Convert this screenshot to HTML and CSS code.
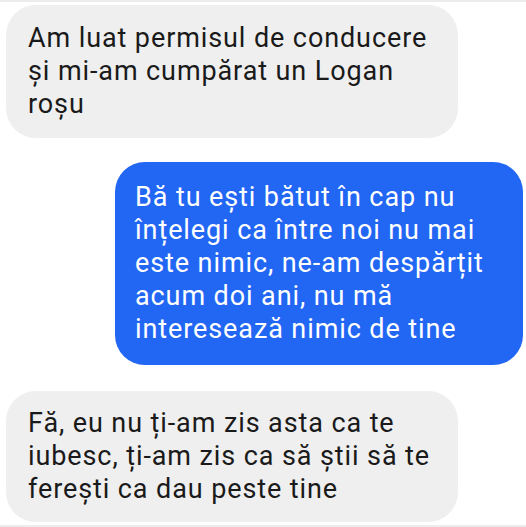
FILE: index.html
```html
<!DOCTYPE html>
<html lang="ro">
<head>
    <meta charset="UTF-8">
    <meta name="viewport" content="width=device-width, initial-scale=1.0">
    <title>Chat</title>
    <link rel="stylesheet" href="styles.css">
</head>
<body>
    <div class="chat">
        <div class="msg received first">
            Am luat permisul de conducere<br>
            și mi-am cumpărat un Logan<br>
            roșu
        </div>
        <div class="msg sent">
            Bă tu ești bătut în cap nu<br>
            înțelegi ca între noi nu mai<br>
            este nimic, ne-am despărțit<br>
            acum doi ani, nu mă<br>
            interesează nimic de tine
        </div>
        <div class="msg received last">
            Fă, eu nu ți-am zis asta ca te<br>
            iubesc, ți-am zis ca să știi să te<br>
            ferești ca dau peste tine
        </div>
    </div>
</body>
</html>
```

FILE: styles.css
```css
body{
    margin: 0;
    background: #fff;
    font-family: Roboto, "Noto Sans", sans-serif;
}
.chat{
    display: flex;
    flex-direction: column;
    height: 527px;
    box-sizing: border-box;
    border-top: 2px solid #ececec;
    border-bottom: 2px solid #ececec;
    padding: 3px 3px 0 6px;
}
.msg{
    font-size: 27px;
    letter-spacing: 0.9px;
    line-height: 33px;
    white-space: nowrap;
    border-radius: 30px;
}
.received{
    background: #efefef;
    color: #1a1a1a;
    width: 452px;
    box-sizing: border-box;
    padding: 17px 22px;
}
.sent{
    align-self: flex-end;
    background: #2266f4;
    color: #fff;
    width: 408px;
    box-sizing: border-box;
    padding: 19px 20px;
    margin-top: 24px;
}
.last{
    margin-top: 26px;
    padding: 16px 22px;
}
```
